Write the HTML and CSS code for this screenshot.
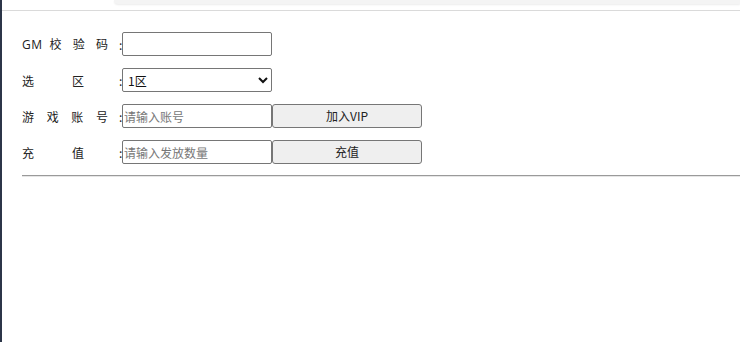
FILE: index.html
```html
<!DOCTYPE html>
<html lang="zh-CN">
<head>
  <meta charset="UTF-8">
  <title>GM 工具</title>
  <link rel="stylesheet" href="styles.css">
</head>
<body>

<div class="topbar">
  <div class="tab-edge"></div>
</div>

<div class="panel">
  <div class="row">
    <span class="label"><span class="name"><span class="latin">GM</span> 校 验 码</span></span><span class="colon">:</span>
    <input type="text" id="gmKey">
  </div>
  <div class="row">
    <span class="label"><span class="name short">选 区</span></span><span class="colon">:</span>
    <select id="zone">
      <option value="1">1区</option>
      <option value="2">2区</option>
      <option value="3">3区</option>
    </select>
  </div>
  <div class="row">
    <span class="label"><span class="name">游 戏 账 号</span></span><span class="colon">:</span>
    <input type="text" id="account" placeholder="请输入账号">
    <button onclick="addVip()">加入VIP</button>
  </div>
  <div class="row">
    <span class="label"><span class="name short">充 值</span></span><span class="colon">:</span>
    <input type="text" id="amount" placeholder="请输入发放数量">
    <button onclick="recharge()">充值</button>
  </div>
  <hr>
</div>

<script>
  function addVip() {
    const account = document.getElementById("account").value;
    if (!account) return;
  }

  function recharge() {
    const amount = document.getElementById("amount").value;
    if (!amount) return;
  }
</script>

</body>
</html>
```

FILE: styles.css
```css
html, body {
  height: 100%;
}
body {
  margin: 0;
  box-sizing: border-box;
  border-left: 2px solid #2c3548;
  background: #fff;
  font-family: "Noto Sans CJK SC", "Noto Sans", sans-serif;
  font-size: 12px;
  color: #222;
}
.topbar {
  height: 10px;
  border-bottom: 1px solid #dadada;
  display: flex;
}
.tab-edge {
  margin-left: 112px;
  flex: 1;
  height: 4px;
  background: #f4f4f4;
  border-bottom-left-radius: 6px;
  box-shadow: 0 1px 2px rgba(0,0,0,0.08);
}
.panel {
  padding: 21px 0 0 20px;
}
.row {
  display: flex;
  align-items: center;
  height: 24px;
  margin-bottom: 12px;
}
.label {
  display: inline-block;
  width: 97px;
}
.name {
  display: inline-block;
  width: 86px;
  text-align: justify;
  text-align-last: justify;
}
.name.short {
  width: 62px;
}
.latin {
  font-family: "Open Sans", "Noto Sans", sans-serif;
  letter-spacing: 0.5px;
}
.colon {
  width: 3px;
}
input, select {
  box-sizing: border-box;
  width: 150px;
  height: 24px;
  margin: 0;
  padding: 1px 1px;
  border: 1px solid #767676;
  border-radius: 2px;
  font-family: inherit;
  font-size: 12px;
  color: #111;
  background: #fff;
}
input::placeholder {
  color: #777;
}
button {
  box-sizing: border-box;
  width: 150px;
  height: 24px;
  margin: 0 0 1px;
  padding: 0;
  border: 1px solid #767676;
  border-radius: 3px;
  background: #efefef;
  font-family: inherit;
  font-size: 12px;
  color: #222;
}
hr {
  margin: -1px 0 0;
  border: none;
  border-top: 1px solid #9a9a9a;
  border-bottom: 1px solid #e6e6e6;
}
```
